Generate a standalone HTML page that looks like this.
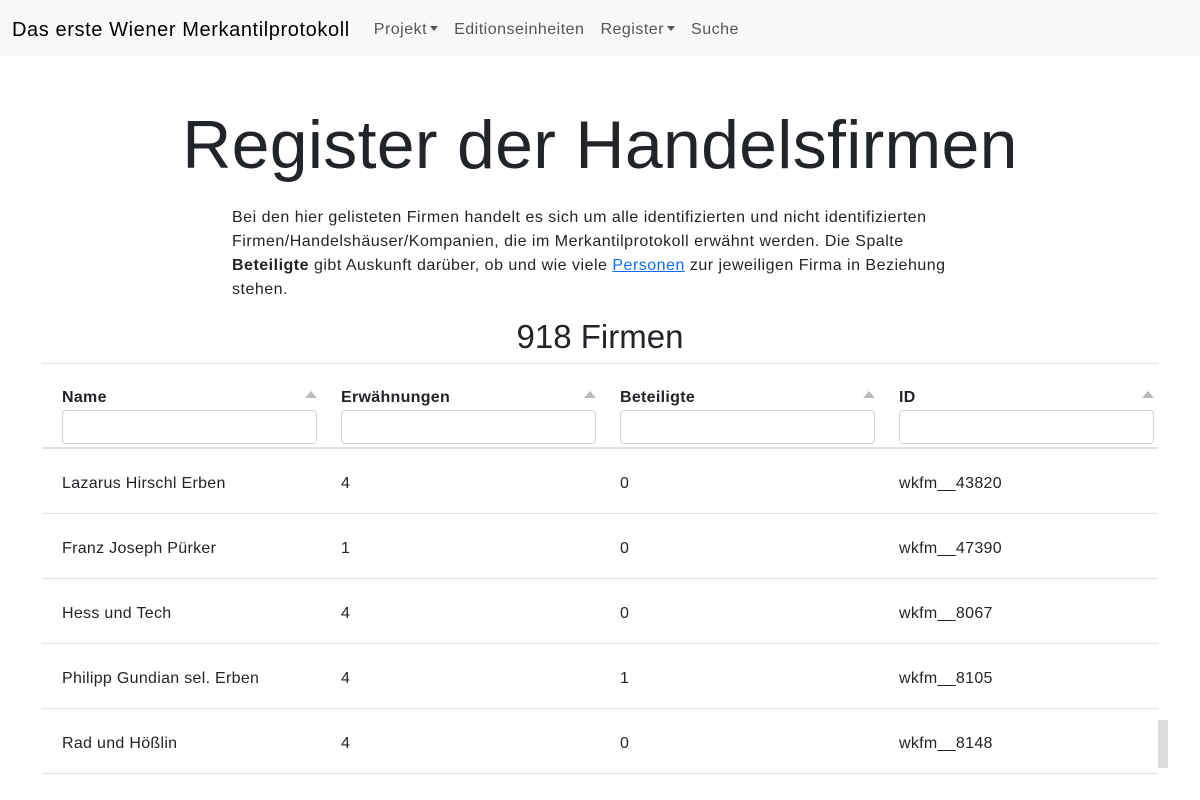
<!DOCTYPE html>
<html><head><meta charset="utf-8"><style>
body{margin:0;font-family:"Liberation Sans","DejaVu Sans",sans-serif;color:#212529;background:#fff;width:1200px;height:800px;overflow:hidden;position:relative}
nav{height:56px;background:#f8f9fa;display:flex;align-items:center;padding-left:12px;padding-top:4px;box-sizing:border-box}
.brand{font-size:20px;color:#000;margin-right:24px;letter-spacing:0.6px}
.nl{font-size:16px;color:#555;margin-right:16px;letter-spacing:0.5px}
.caret{display:inline-block;border-top:5px solid #555;border-left:4px solid transparent;border-right:4px solid transparent;vertical-align:3px;margin-left:3px}
h1{position:absolute;top:100px;left:0;width:1200px;text-align:center;font-weight:300;font-size:68px;margin:0;line-height:90px;letter-spacing:0.3px}
p{position:absolute;left:232px;top:206px;width:800px;margin:0;font-size:16px;line-height:24px;letter-spacing:0.5px}
a{color:#0d6efd}
h2{position:absolute;top:314px;width:1200px;text-align:center;margin:0;font-weight:400;font-size:33px;line-height:46px}
.tbl{position:absolute;left:42px;top:363px;width:1116px;border-top:1px solid #dee2e6}
.hd{height:83px;border-bottom:2px solid #dee2e6;position:relative}
.col{position:absolute;width:279px}
.hd .col b{position:absolute;top:25px;left:20px;font-size:16px;letter-spacing:0.3px}
.hd .col input{position:absolute;top:46px;left:20px;width:255px;height:34px;box-sizing:border-box;border:1px solid #ced4da;border-radius:4px}
.tri{position:absolute;top:27px;left:263px;border-bottom:7px solid #bbb;border-left:6px solid transparent;border-right:6px solid transparent}
.row{height:64px;border-bottom:1px solid #dee2e6;position:relative;font-size:16px;letter-spacing:0.3px}
.row .col span{position:absolute;left:20px;top:26px}
</style></head><body>
<nav><span class="brand">Das erste Wiener Merkantilprotokoll</span><span class="nl">Projekt<i class="caret"></i></span><span class="nl">Editionseinheiten</span><span class="nl">Register<i class="caret"></i></span><span class="nl">Suche</span></nav>
<h1>Register der Handelsfirmen</h1>
<p>Bei den hier gelisteten Firmen handelt es sich um alle identifizierten und nicht identifizierten<br>Firmen/Handelshäuser/Kompanien, die im Merkantilprotokoll erwähnt werden. Die Spalte<br><b>Beteiligte</b> gibt Auskunft darüber, ob und wie viele <a href="#">Personen</a> zur jeweiligen Firma in Beziehung<br>stehen.</p>
<h2>918 Firmen</h2>
<div class="tbl">
<div class="hd">
<div class="col" style="left:0"><b>Name</b><i class="tri"></i><input></div>
<div class="col" style="left:279px"><b>Erwähnungen</b><i class="tri"></i><input></div>
<div class="col" style="left:558px"><b>Beteiligte</b><i class="tri"></i><input></div>
<div class="col" style="left:837px"><b>ID</b><i class="tri"></i><input></div>
</div>
<div class="row"><div class="col" style="left:0"><span>Lazarus Hirschl Erben</span></div><div class="col" style="left:279px"><span>4</span></div><div class="col" style="left:558px"><span>0</span></div><div class="col" style="left:837px"><span>wkfm__43820</span></div></div>
<div class="row"><div class="col" style="left:0"><span>Franz Joseph Pürker</span></div><div class="col" style="left:279px"><span>1</span></div><div class="col" style="left:558px"><span>0</span></div><div class="col" style="left:837px"><span>wkfm__47390</span></div></div>
<div class="row"><div class="col" style="left:0"><span>Hess und Tech</span></div><div class="col" style="left:279px"><span>4</span></div><div class="col" style="left:558px"><span>0</span></div><div class="col" style="left:837px"><span>wkfm__8067</span></div></div>
<div class="row"><div class="col" style="left:0"><span>Philipp Gundian sel. Erben</span></div><div class="col" style="left:279px"><span>4</span></div><div class="col" style="left:558px"><span>1</span></div><div class="col" style="left:837px"><span>wkfm__8105</span></div></div>
<div class="row"><div class="col" style="left:0"><span>Rad und Hößlin</span></div><div class="col" style="left:279px"><span>4</span></div><div class="col" style="left:558px"><span>0</span></div><div class="col" style="left:837px"><span>wkfm__8148</span></div></div>
</div>
<div style="position:absolute;left:1158px;top:720px;width:10px;height:48px;background:#dcdcdc"></div>
</body></html>
